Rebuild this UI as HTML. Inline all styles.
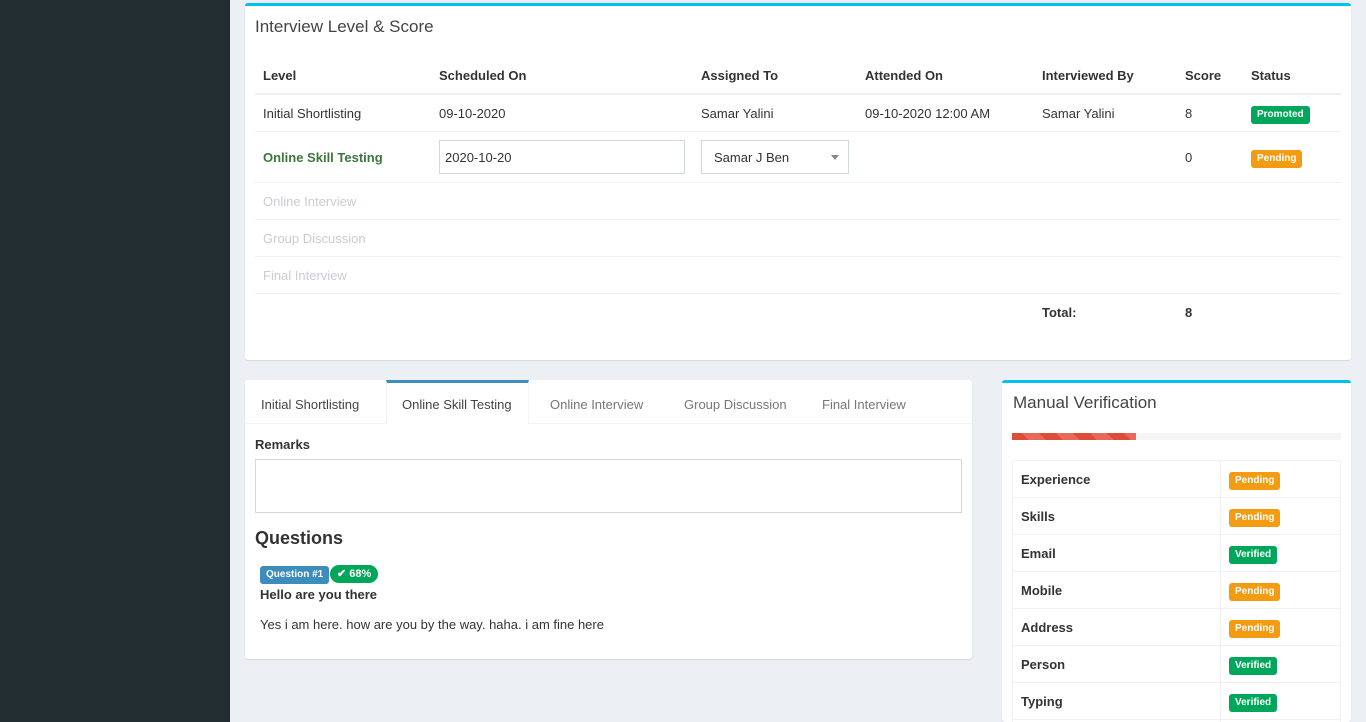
<!DOCTYPE html>
<html style="overflow:hidden;height:722px"><head><style>
*{box-sizing:border-box;margin:0;padding:0}
body{width:1366px;height:722px;overflow:hidden;background:#ecf0f5;font-family:"Liberation Sans",sans-serif;font-size:13px;color:#333;position:relative}
.a{position:absolute}
.sb{left:0;top:0;width:230px;height:722px;background:#222d32}
.box{background:#fff;border-radius:3px;box-shadow:0 1px 1px rgba(0,0,0,.1)}
.line{height:1px;background:#f0f0f0}
.b{font-weight:bold}
.lbl{display:inline-block;color:#fff;font-size:10px;font-weight:bold;padding:3px 6px;border-radius:3px;line-height:12px}
.pen{background:#f39c12}.ver{background:#00a65a}.pro{background:#00a65a}
.grey{color:#c8cdd3}
</style></head><body>
<div class="a sb"></div>

<div class="a box" style="left:245px;top:3px;width:1106px;height:357px;border-top:3px solid #00c0ef"></div>
<div class="a" style="left:255px;top:17px;font-size:17px;color:#444">Interview Level &amp; Score</div>
<div class="a b" style="left:263px;top:68px">Level</div>
<div class="a b" style="left:439px;top:68px">Scheduled On</div>
<div class="a b" style="left:701px;top:68px">Assigned To</div>
<div class="a b" style="left:865px;top:68px">Attended On</div>
<div class="a b" style="left:1042px;top:68px">Interviewed By</div>
<div class="a b" style="left:1185px;top:68px">Score</div>
<div class="a b" style="left:1251px;top:68px">Status</div>
<div class="a" style="left:255px;top:93px;width:1086px;height:2px;background:#f0f0f0"></div>
<div class="a" style="left:263px;top:106px">Initial Shortlisting</div>
<div class="a" style="left:439px;top:106px">09-10-2020</div>
<div class="a" style="left:701px;top:106px">Samar Yalini</div>
<div class="a" style="left:865px;top:106px">09-10-2020 12:00 AM</div>
<div class="a" style="left:1042px;top:106px">Samar Yalini</div>
<div class="a" style="left:1185px;top:106px">8</div>
<div class="a lbl pro" style="left:1251px;top:106px">Promoted</div>
<div class="a line" style="left:255px;top:131px;width:1086px"></div>
<div class="a b" style="left:263px;top:150px;color:#3c763d">Online Skill Testing</div>
<div class="a" style="left:439px;top:140px;width:246px;height:34px;border:1px solid #d2d6de;padding:9px 5px">2020-10-20</div>
<div class="a" style="left:701px;top:140px;width:148px;height:34px;border:1px solid #d2d6de;padding:9px 12px">Samar J Ben<span style="position:absolute;right:9px;top:14px;border:4px solid transparent;border-top:5px solid #888;border-bottom:0"></span></div>
<div class="a" style="left:1185px;top:150px">0</div>
<div class="a lbl pen" style="left:1251px;top:150px">Pending</div>
<div class="a line" style="left:255px;top:182px;width:1086px"></div>
<div class="a grey" style="left:263px;top:194px">Online Interview</div>
<div class="a line" style="left:255px;top:219px;width:1086px"></div>
<div class="a grey" style="left:263px;top:231px">Group Discussion</div>
<div class="a line" style="left:255px;top:256px;width:1086px"></div>
<div class="a grey" style="left:263px;top:268px">Final Interview</div>
<div class="a line" style="left:255px;top:293px;width:1086px"></div>
<div class="a b" style="left:1042px;top:305px">Total:</div>
<div class="a b" style="left:1185px;top:305px">8</div>

<div class="a box" style="left:245px;top:380px;width:727px;height:279px"></div>
<div class="a" style="left:245px;top:423px;width:727px;height:1px;background:#f4f4f4"></div>
<div class="a" style="left:261px;top:397px;color:#444">Initial Shortlisting</div>
<div class="a" style="left:386px;top:380px;width:143px;height:44px;background:#fff;border-top:3px solid #3c8dbc;border-left:1px solid #f4f4f4;border-right:1px solid #f4f4f4"></div>
<div class="a" style="left:402px;top:397px;color:#444">Online Skill Testing</div>
<div class="a" style="left:550px;top:397px;color:#777">Online Interview</div>
<div class="a" style="left:684px;top:397px;color:#777">Group Discussion</div>
<div class="a" style="left:822px;top:397px;color:#777">Final Interview</div>
<div class="a b" style="left:255px;top:437px">Remarks</div>
<div class="a" style="left:255px;top:459px;width:707px;height:54px;border:1px solid #d2d6de"></div>
<div class="a b" style="left:255px;top:528px;font-size:18px">Questions</div>
<div class="a lbl" style="left:260px;top:566px;background:#3c8dbc;padding:3px 6px">Question #1</div>
<div class="a lbl ver" style="left:330px;top:565px;border-radius:10px;font-size:11px;padding:3px 7px">✔ 68%</div>
<div class="a b" style="left:260px;top:587px">Hello are you there</div>
<div class="a" style="left:260px;top:617px">Yes i am here. how are you by the way. haha. i am fine here</div>

<div class="a box" style="left:1002px;top:380px;width:349px;height:342px;border-top:3px solid #00c0ef"></div>
<div class="a" style="left:1013px;top:393px;font-size:17px;color:#444">Manual Verification</div>
<div class="a" style="left:1012px;top:433px;width:329px;height:7px;background:#f5f5f5"></div>
<div class="a" style="left:1012px;top:433px;width:124px;height:7px;background:repeating-linear-gradient(45deg,#dd4b39 0 12px,#e66a5a 12px 24px)"></div>
<div class="a" style="left:1012px;top:460px;width:329px;height:270px;border:1px solid #f0f0f0"></div>
<div class="a" style="left:1220px;top:460px;width:1px;height:270px;background:#f0f0f0"></div>
<div class="a line" style="left:1012px;top:497px;width:329px"></div>
<div class="a line" style="left:1012px;top:534px;width:329px"></div>
<div class="a line" style="left:1012px;top:571px;width:329px"></div>
<div class="a line" style="left:1012px;top:608px;width:329px"></div>
<div class="a line" style="left:1012px;top:645px;width:329px"></div>
<div class="a line" style="left:1012px;top:682px;width:329px"></div>
<div class="a line" style="left:1012px;top:719px;width:329px"></div>
<div class="a b" style="left:1021px;top:472px">Experience</div><div class="a lbl pen" style="left:1229px;top:472px">Pending</div>
<div class="a b" style="left:1021px;top:509px">Skills</div><div class="a lbl pen" style="left:1229px;top:509px">Pending</div>
<div class="a b" style="left:1021px;top:546px">Email</div><div class="a lbl ver" style="left:1229px;top:546px">Verified</div>
<div class="a b" style="left:1021px;top:583px">Mobile</div><div class="a lbl pen" style="left:1229px;top:583px">Pending</div>
<div class="a b" style="left:1021px;top:620px">Address</div><div class="a lbl pen" style="left:1229px;top:620px">Pending</div>
<div class="a b" style="left:1021px;top:657px">Person</div><div class="a lbl ver" style="left:1229px;top:657px">Verified</div>
<div class="a b" style="left:1021px;top:694px">Typing</div><div class="a lbl ver" style="left:1229px;top:694px">Verified</div>
</body></html>
